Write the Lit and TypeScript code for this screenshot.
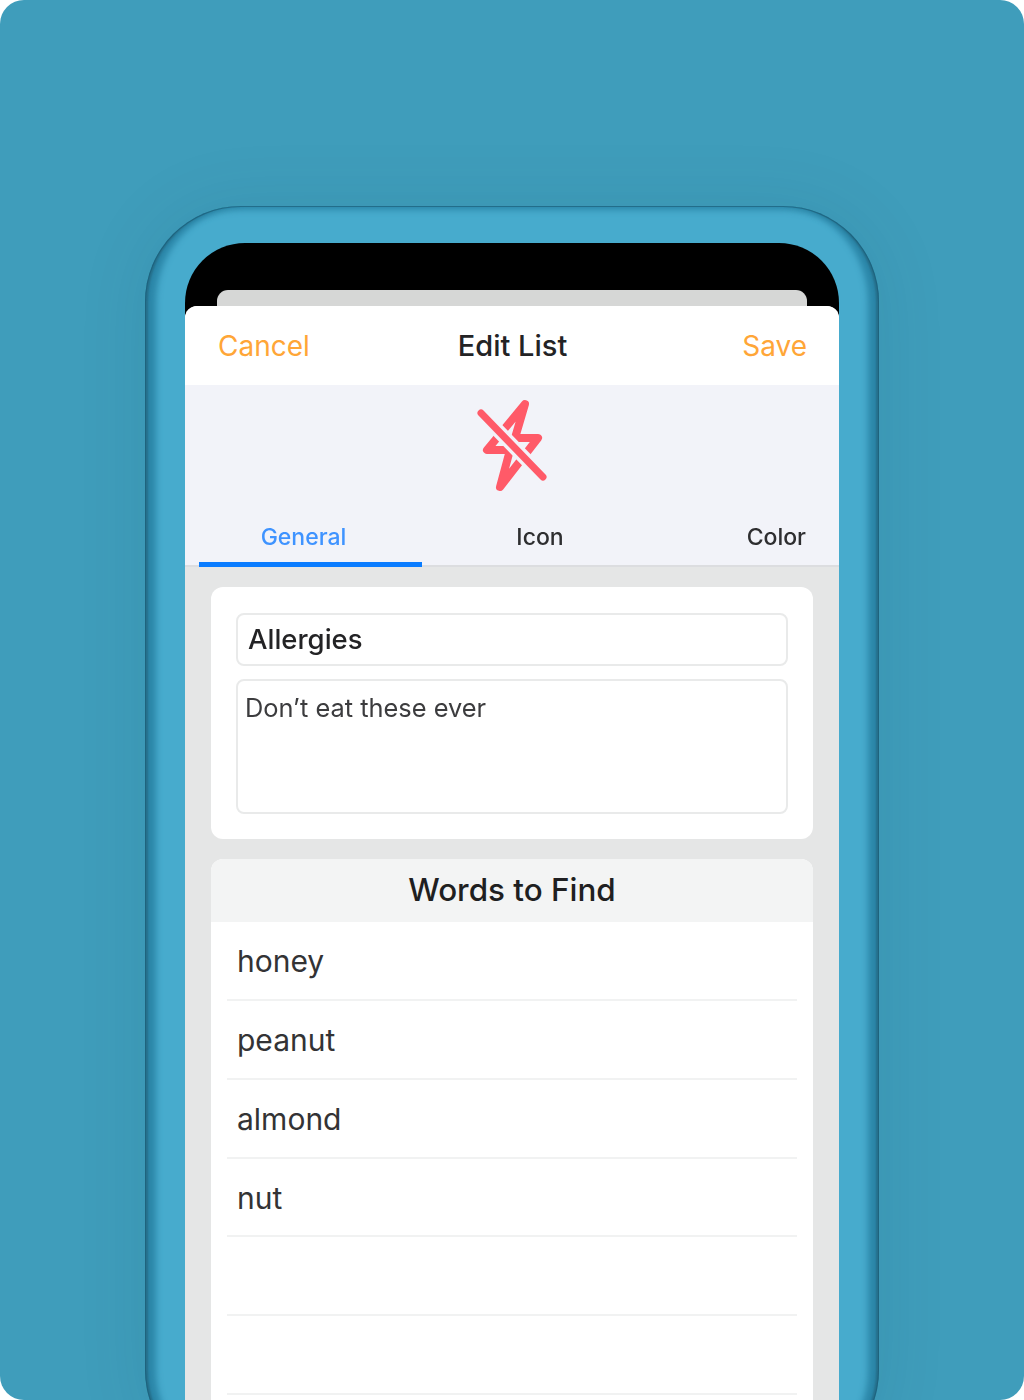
import { LitElement, html, css, svg } from "lit";
import { customElement } from "lit/decorators.js";

const WORDS = ["honey", "peanut", "almond", "nut", "", "", ""];

@customElement("app-root")
export class AppRoot extends LitElement {
  static styles = css`
    :host {
      display: block;
      height: 1400px;
      overflow: hidden;
      background: #fff;
      font-family: Inter, "Liberation Sans", sans-serif;
    }
    .page {
      height: 1400px;
      box-sizing: border-box;
      background: #3f9dbb;
      border-radius: 24px;
      padding-top: 206px;
      display: flex;
      justify-content: center;
      overflow: hidden;
    }
    .phone {
      width: 734px;
      height: 1260px;
      box-sizing: border-box;
      flex: none;
      padding: 37px 40px 0;
      border-radius: 96px;
      background: #47abcd;
      box-shadow:
        0 0 70px rgba(20, 70, 90, 0.1),
        inset 0 0 0 1px rgba(25, 90, 115, 0.55),
        inset 4px 0 2px -1px #256f8b,
        inset -4px 0 2px -1px #256f8b,
        inset 15px 0 6px -4px #2b86a8,
        inset -15px 0 6px -4px #2b86a8,
        inset 0 10px 6px -6px #2f8aab;
    }
    .screen {
      background: #000;
      border-radius: 60px 60px 0 0;
      padding-top: 47px;
      height: 1300px;
      overflow: hidden;
      filter: blur(0.6px);
    }
    .back-sheet {
      height: 16px;
      margin: 0 32px;
      background: #d6d7d6;
      border-radius: 11px 11px 0 0;
    }
    .sheet {
      background: #e5e6e6;
      border-radius: 12px 12px 0 0;
      overflow: hidden;
    }
    .nav {
      height: 79px;
      background: #fff;
      display: grid;
      grid-template-columns: 1fr auto 1fr;
      align-items: center;
      padding: 0 32px 0 33px;
      font-size: 28px;
      color: #ffa637;
    }
    .nav .title {
      color: #232325;
      font-weight: 500;
      font-size: 29px;
    }
    .nav .save {
      text-align: right;
    }
    .head {
      height: 182px;
      background: #f2f3f9;
      display: flex;
      flex-direction: column;
    }
    .icon {
      height: 130px;
      padding-top: 7px;
      box-sizing: border-box;
      display: flex;
      justify-content: center;
      flex: none;
    }
    .tabs {
      display: flex;
      height: 52px;
      padding-left: 14px;
      font-size: 23px;
      color: #2e2e30;
      font-weight: 500;
      box-shadow: inset 0 -2px 0 #dcdde0;
    }
    .tab {
      height: 52px;
      box-sizing: border-box;
      display: flex;
      align-items: center;
      justify-content: center;
      padding-bottom: 8px;
    }
    .tab.general {
      width: 223px;
      padding: 0 14px 3px 0;
      color: #3f93ff;
      border-bottom: 5px solid #0a7cff;
    }
    .tab.icon-tab {
      width: 236px;
    }
    .tab.color {
      flex: 1;
      justify-content: flex-end;
      padding-right: 33px;
    }
    .body {
      padding: 20px 26px 0;
      display: flex;
      flex-direction: column;
      gap: 20px;
    }
    .card {
      background: #fff;
      border-radius: 12px;
      overflow: hidden;
    }
    .form {
      padding: 26px 25px 25px;
      display: flex;
      flex-direction: column;
      gap: 13px;
    }
    .field {
      box-sizing: border-box;
      border: 2px solid #e9eaea;
      border-radius: 8px;
      color: #232325;
    }
    .field.name {
      height: 53px;
      padding: 0 10px 2px;
      display: flex;
      align-items: center;
      font-size: 27.5px;
      font-weight: 500;
    }
    .field.notes {
      height: 135px;
      padding: 11px 7px;
      font-size: 25.4px;
      color: #3c3c3e;
    }
    .words-title {
      height: 63px;
      box-sizing: border-box;
      padding-bottom: 2px;
      background: #f3f4f4;
      display: flex;
      align-items: center;
      justify-content: center;
      font-size: 31.4px;
      font-weight: 500;
      color: #1f1f21;
    }
    .rows {
      padding: 0 16px;
    }
    .row {
      height: 78.85px;
      box-sizing: border-box;
      border-bottom: 2px solid #f1f2f2;
      padding: 2px 0 0 10px;
      display: flex;
      align-items: center;
      font-size: 30px;
      color: #333335;
    }
  `;

  private renderBolt() {
    // bolt outline, then a halo in the header colour, then the slash on top
    return svg`
      <svg width="80" height="110" viewBox="472 392 80 110" fill="none" stroke-linecap="round" stroke-linejoin="round">
        <path d="M525 404 L487 450 H510 L500 487 L538 438 H515 Z" stroke="#ff5a68" stroke-width="8" />
        <path d="M481 413 L543 477" stroke="#f2f3f9" stroke-width="14" />
        <path d="M481 413 L543 477" stroke="#ff5a68" stroke-width="7" />
      </svg>
    `;
  }

  render() {
    return html`
      <div class="page">
        <div class="phone">
          <div class="screen">
            <div class="back-sheet"></div>
            <div class="sheet">
              <div class="nav">
                <span>Cancel</span>
                <span class="title">Edit List</span>
                <span class="save">Save</span>
              </div>
              <div class="head">
                <div class="icon">${this.renderBolt()}</div>
                <div class="tabs">
                  <div class="tab general">General</div>
                  <div class="tab icon-tab">Icon</div>
                  <div class="tab color">Color</div>
                </div>
              </div>
              <div class="body">
                <div class="card form">
                  <div class="field name">Allergies</div>
                  <div class="field notes">Don’t eat these ever</div>
                </div>
                <div class="card">
                  <div class="words-title">Words to Find</div>
                  <div class="rows">
                    ${WORDS.map((w) => html`<div class="row">${w}</div>`)}
                  </div>
                </div>
              </div>
            </div>
          </div>
        </div>
      </div>
    `;
  }
}
